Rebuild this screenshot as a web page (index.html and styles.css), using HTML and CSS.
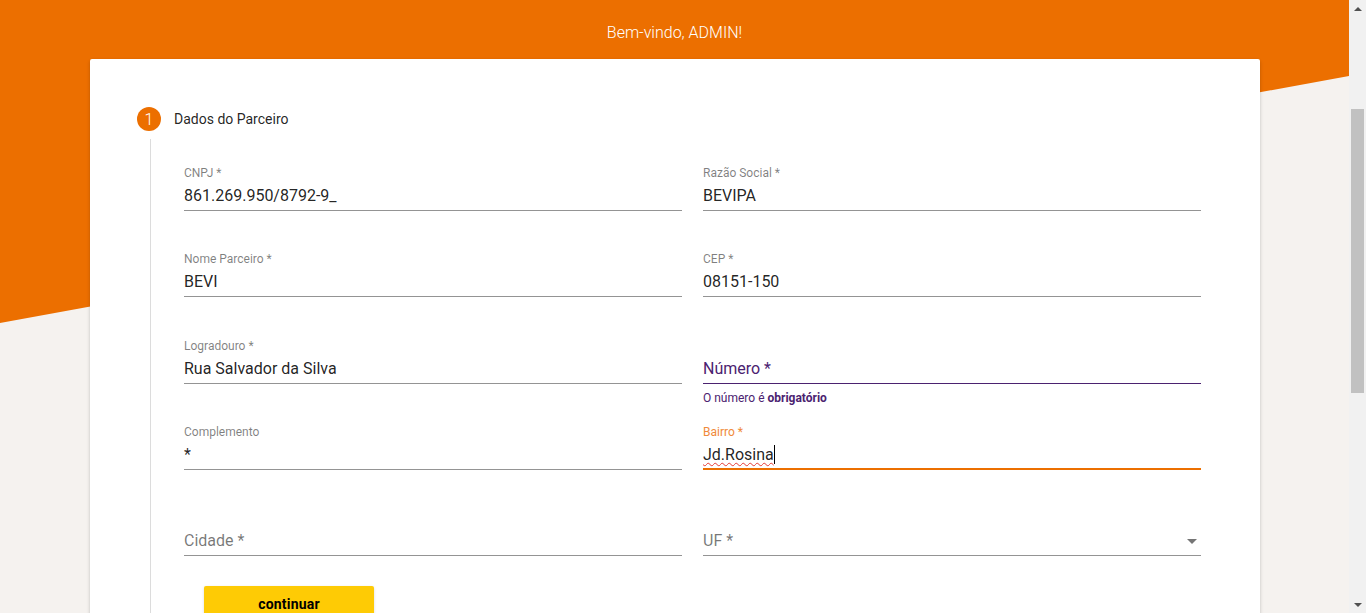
FILE: index.html
```html
<!DOCTYPE html>
<html lang="pt-BR">
<head>
<meta charset="utf-8">
<title>Cadastro de Parceiro</title>
<link rel="stylesheet" href="styles.css">
</head>
<body>
<div class="app">
  <div class="page">
    <div class="bg"></div>
    <header class="header">Bem-vindo, ADMIN!</header>
    <main class="card">
      <div class="step-head">
        <span class="step-num">1</span>
        <span class="step-title">Dados do Parceiro</span>
      </div>
      <div class="step-body">
        <div class="grid">
          <div class="field">
            <div class="label">CNPJ *</div>
            <div class="control"><span class="value">861.269.950/8792-9_</span></div>
          </div>
          <div class="field">
            <div class="label">Razão Social *</div>
            <div class="control"><span class="value">BEVIPA</span></div>
          </div>
          <div class="field">
            <div class="label">Nome Parceiro *</div>
            <div class="control"><span class="value">BEVI</span></div>
          </div>
          <div class="field">
            <div class="label">CEP *</div>
            <div class="control"><span class="value">08151-150</span></div>
          </div>
          <div class="field">
            <div class="label">Logradouro *</div>
            <div class="control"><span class="value">Rua Salvador da Silva</span></div>
          </div>
          <div class="field invalid">
            <div class="label"></div>
            <div class="control"><span class="placeholder">Número *</span></div>
            <div class="error">O número é <b>obrigatório</b></div>
          </div>
          <div class="field">
            <div class="label">Complemento</div>
            <div class="control"><span class="value">*</span></div>
          </div>
          <div class="field focused">
            <div class="label">Bairro *</div>
            <div class="control"><span class="value misspelled">Jd.Rosina</span><span class="caret"></span></div>
          </div>
          <div class="field last">
            <div class="label"></div>
            <div class="control"><span class="placeholder">Cidade *</span></div>
          </div>
          <div class="field last">
            <div class="label"></div>
            <div class="control select"><span class="placeholder">UF *</span><span class="arrow"></span></div>
          </div>
        </div>
        <button class="btn-continue" type="button">continuar</button>
      </div>
    </main>
  </div>
</div>
<div class="scrollbar" aria-hidden="true">
  <div class="sb-btn"><span class="sb-up"></span></div>
  <div class="sb-track"><div class="sb-thumb"></div></div>
  <div class="sb-btn"><span class="sb-down"></span></div>
</div>
</body>
</html>
```

FILE: styles.css
```css
html, body {
  margin: 0;
  padding: 0;
  height: 100%;
  overflow: hidden;
}

body {
  display: flex;
  font-family: Roboto, "Liberation Sans", Arial, sans-serif;
  background: #f5f2ef;
  color: rgba(0, 0, 0, 0.87);
}

.app {
  flex: 1;
  min-width: 0;
  height: 100%;
  overflow: hidden;
}

.scrollbar {
  width: 17px;
  flex: none;
  height: 100%;
  background: #f1f1f1;
  display: flex;
  flex-direction: column;
}

.sb-btn {
  height: 17px;
  display: flex;
  align-items: center;
  justify-content: center;
}

.sb-up {
  width: 0;
  height: 0;
  border-left: 4px solid transparent;
  border-right: 4px solid transparent;
  border-bottom: 4px solid #505050;
}

.sb-down {
  width: 0;
  height: 0;
  border-left: 4px solid transparent;
  border-right: 4px solid transparent;
  border-top: 4px solid #505050;
}

.sb-track {
  flex: 1;
  padding: 92px 2px 0;
}

.sb-thumb {
  height: 284px;
  background: #c1c1c1;
}

.page {
  position: relative;
  min-height: 944px;
}

.bg {
  position: absolute;
  top: 0;
  left: 0;
  right: 0;
  height: 323px;
  background: #ec6f00;
  clip-path: polygon(0 0, 100% 0, 100% 76px, 0 323px);
}

.header {
  position: relative;
  height: 59px;
  box-sizing: border-box;
  padding-top: 5px;
  display: flex;
  align-items: center;
  justify-content: center;
  color: #fff;
  font-size: 16px;
  font-weight: 300;
}

.card {
  position: relative;
  margin-left: 90px;
  width: 1170px;
  box-sizing: border-box;
  min-height: 880px;
  background: #fff;
  border-radius: 2px;
  box-shadow: 0 2px 4px rgba(0, 0, 0, 0.12), 0 1px 3px rgba(0, 0, 0, 0.1);
  padding: 48px 59px 40px 47px;
}

.step-head {
  display: flex;
  align-items: center;
  gap: 13px;
  height: 24px;
}

.step-num {
  width: 24px;
  height: 24px;
  border-radius: 50%;
  background: #ec6f00;
  color: #fff;
  font-size: 16px;
  display: flex;
  align-items: center;
  justify-content: center;
  font-weight: 300;
}

.step-title {
  font-size: 14px;
  color: rgba(0, 0, 0, 0.87);
}

.step-body {
  margin-top: 8px;
  margin-left: 13px;
  border-left: 1px solid #dcdcdc;
  padding: 26px 0 0 33px;
  min-height: 700px;
}

.grid {
  display: grid;
  grid-template-columns: 498px 498px;
  column-gap: 21px;
}

.field {
  height: 86.25px;
  display: flex;
  flex-direction: column;
}

.field.last {
  height: 46px;
}

.label {
  height: 14px;
  padding-top: 1px;
  font-size: 12px;
  line-height: 14px;
  color: rgba(0, 0, 0, 0.5);
}

.control {
  position: relative;
  margin-top: 7px;
  height: 23px;
  border-bottom: 1px solid #949494;
  font-size: 16px;
  line-height: 18px;
  display: flex;
  align-items: flex-start;
}

.value {
  color: rgba(0, 0, 0, 0.87);
}

.placeholder {
  color: rgba(0, 0, 0, 0.54);
}

.invalid .control {
  border-bottom-color: #4b2270;
}

.invalid .placeholder {
  color: #4b2270;
}

.error {
  margin-top: 7px;
  font-size: 12px;
  line-height: 14px;
  color: #4b2270;
}

.error b {
  font-weight: 700;
}

.focused .label {
  color: #f08a3a;
}

.focused .control {
  height: 22px;
  border-bottom: 2px solid #ec6f00;
}

.misspelled {
  text-decoration: underline wavy #e53935;
  text-decoration-thickness: 1px;
  text-underline-offset: 2px;
}

.caret {
  width: 1px;
  height: 19px;
  margin-top: -1px;
  background: #000;
}

.select {
  justify-content: space-between;
}

.arrow {
  width: 0;
  height: 0;
  margin: 7px 4px 0 0;
  border-left: 5px solid transparent;
  border-right: 5px solid transparent;
  border-top: 5px solid rgba(0, 0, 0, 0.54);
}

.btn-continue {
  display: block;
  margin: 30px 0 0 20px;
  width: 170px;
  height: 36px;
  border: 0;
  border-radius: 2px;
  background: #fecb05;
  color: #000;
  font-family: Roboto, "Liberation Sans", Arial, sans-serif;
  font-size: 14px;
  font-weight: 700;
  letter-spacing: 0.2px;
  box-shadow: 0 1px 3px rgba(0, 0, 0, 0.15);
  cursor: pointer;
}
```
